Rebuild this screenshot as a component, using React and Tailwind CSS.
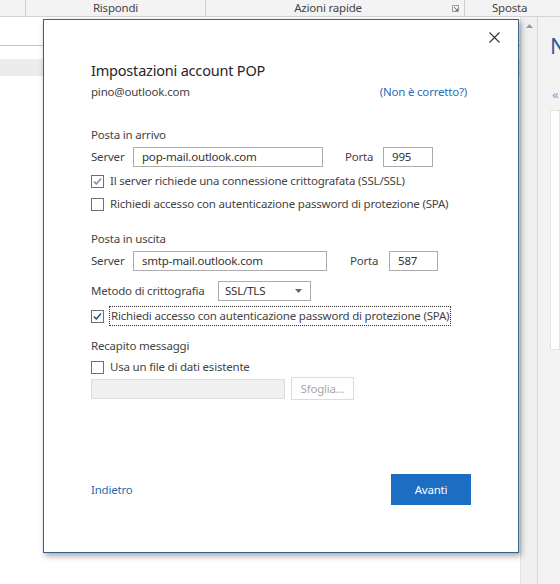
import React, { useState } from 'react';

const font = { fontFamily: '"Noto Sans", "Open Sans", Arial, sans-serif' };

function CheckBox({ checked, tone = 'blue' }) {
    return (
        <span className="flex h-[13px] w-[13px] shrink-0 items-center justify-center border border-[#707070] bg-white">
            {checked && (
                <svg width="9" height="9" viewBox="0 0 9 9">
                    <path
                        d="M1 4.6 L3.4 7 L8 1.6"
                        fill="none"
                        stroke={tone === 'blue' ? '#1e4f8f' : '#8a8a8a'}
                        strokeWidth="1.5"
                    />
                </svg>
            )}
        </span>
    );
}

function TextBox({ value, className }) {
    return (
        <div className={`flex h-[20px] items-center border border-[#acacac] bg-white px-[8px] text-[#333] ${className}`}>
            {value}
        </div>
    );
}

function Ribbon() {
    return (
        <div className="flex h-[17px] border-b border-[#d4d4d4] bg-[#f3f3f3] leading-[16px] text-[#444]">
            <div className="w-[26px] border-r border-[#cfcfcf]" />
            <div className="w-[180px] border-r border-[#cfcfcf] text-center">Rispondi</div>
            <div className="relative w-[259px] border-r border-[#cfcfcf] pr-[14px] text-center">
                Azioni rapide
                <svg className="absolute right-[5px] top-[5px]" width="7" height="7" viewBox="0 0 7 7">
                    <path d="M0.5 0.5 H6.5 V6.5 H0.5 Z" fill="none" stroke="#9a9a9a" />
                    <path d="M2 2 L5.5 5.5 M3.5 5.5 H5.5 V3.5" fill="none" stroke="#777" />
                </svg>
            </div>
            <div className="pl-[27px]">Sposta</div>
        </div>
    );
}

export default function App() {
    const [useExisting, setUseExisting] = useState(false);

    return (
        <div className="relative h-[584px] w-[560px] overflow-hidden bg-white text-[11.5px] tracking-[-0.2px]" style={font}>
            <Ribbon />

            {/* Outlook window behind the dialog */}
            <div className="flex h-[567px]">
                <div className="flex-1 bg-white">
                    <div className="h-[29px] border-b border-[#c6c6c6]" />
                    <div className="mt-[13px] h-[17px] bg-[#ececec]" />
                </div>
                <div className="w-[17px] border-l border-[#e2e2e2] bg-[#f0f0f0] pt-[7px]">
                    <svg className="mx-auto" width="7" height="4" viewBox="0 0 7 4">
                        <path d="M0 4 L3.5 0 L7 4 Z" fill="#9a9a9a" />
                    </svg>
                </div>
                <div className="w-[23px] border-l border-[#d8d8d8] bg-[#f3f3f3] pl-[12px]">
                    <div className="mt-[15px] text-[22px] leading-[26px] text-[#2a5f98]">N</div>
                    <div className="mt-[28px] pl-[2px] text-[13px] leading-[16px] text-[#7ba4cf]">«</div>
                    <div className="mt-[8px] h-[240px] border border-[#e4e4e4] bg-white" />
                </div>
            </div>

            {/* Account settings dialog */}
            <div className="absolute left-[43px] top-[19px] flex h-[534px] w-[476px] flex-col border border-[#34628c] bg-white pl-[47px] pr-[47px] text-[#444] shadow-[2px_3px_6px_rgba(0,0,0,0.35)]">
                <button className="absolute right-[16px] top-[10px] p-[2px]">
                    <svg width="11" height="11" viewBox="0 0 11 11">
                        <path d="M0.5 0.5 L10.5 10.5 M10.5 0.5 L0.5 10.5" stroke="#333" strokeWidth="1.1" />
                    </svg>
                </button>

                <h1 className="mt-[40px] text-[14.5px] leading-[20px] text-[#262626]">Impostazioni account POP</h1>
                <div className="mt-[4px] flex justify-between pr-[4px] leading-[16px]">
                    <span>pino@outlook.com</span>
                    <span className="text-[#1f6db5]">(Non è corretto?)</span>
                </div>

                <div className="mt-[27px] leading-[16px]">Posta in arrivo</div>
                <div className="mt-[4px] flex items-center">
                    <span className="w-[42px]">Server</span>
                    <TextBox value="pop-mail.outlook.com" className="w-[190px]" />
                    <span className="ml-[22px] w-[38px]">Porta</span>
                    <TextBox value="995" className="w-[50px]" />
                </div>
                <label className="mt-[6px] flex items-center gap-[6px] leading-[16px]">
                    <CheckBox checked tone="gray" />
                    Il server richiede una connessione crittografata (SSL/SSL)
                </label>
                <label className="mt-[7px] flex items-center gap-[6px] leading-[16px]">
                    <CheckBox checked={false} />
                    Richiedi accesso con autenticazione password di protezione (SPA)
                </label>

                <div className="mt-[19px] leading-[16px]">Posta in uscita</div>
                <div className="mt-[4px] flex items-center">
                    <span className="w-[42px]">Server</span>
                    <TextBox value="smtp-mail.outlook.com" className="w-[194px]" />
                    <span className="ml-[23px] w-[39px]">Porta</span>
                    <TextBox value="587" className="w-[49px]" />
                </div>
                <div className="mt-[10px] flex items-center">
                    <span className="w-[127px]">Metodo di crittografia</span>
                    <div className="flex h-[20px] w-[93px] items-center justify-between border border-[#acacac] bg-white pl-[6px] pr-[8px] text-[#333]">
                        SSL/TLS
                        <svg width="7" height="4" viewBox="0 0 7 4">
                            <path d="M0 0 L3.5 4 L7 0 Z" fill="#666" />
                        </svg>
                    </div>
                </div>
                <label className="mt-[5px] flex items-center gap-[5px]">
                    <CheckBox checked />
                    <span className="whitespace-nowrap border border-dotted border-[#333] px-[1px] leading-[18px]">
                        Richiedi accesso con autenticazione password di protezione (SPA)
                    </span>
                </label>

                <div className="mt-[12px] leading-[16px]">Recapito messaggi</div>
                <label
                    className="mt-[5px] flex items-center gap-[6px] leading-[16px]"
                    onClick={() => setUseExisting(!useExisting)}
                >
                    <CheckBox checked={useExisting} />
                    Usa un file di dati esistente
                </label>
                <div className="mt-[2px] flex items-center gap-[6px]">
                    <div className="h-[20px] w-[194px] border border-[#dcdcdc] bg-[#f0f0f0]" />
                    <button className="h-[23px] w-[63px] border border-[#dcdcdc] bg-white text-[#a8a8a8]">
                        Sfoglia...
                    </button>
                </div>

                <div className="mb-[47px] mt-auto flex items-center justify-between">
                    <span className="text-[#1f6db5]">Indietro</span>
                    <button className="h-[31px] w-[80px] bg-[#1b6ec2] text-white">Avanti</button>
                </div>
            </div>
        </div>
    );
}
